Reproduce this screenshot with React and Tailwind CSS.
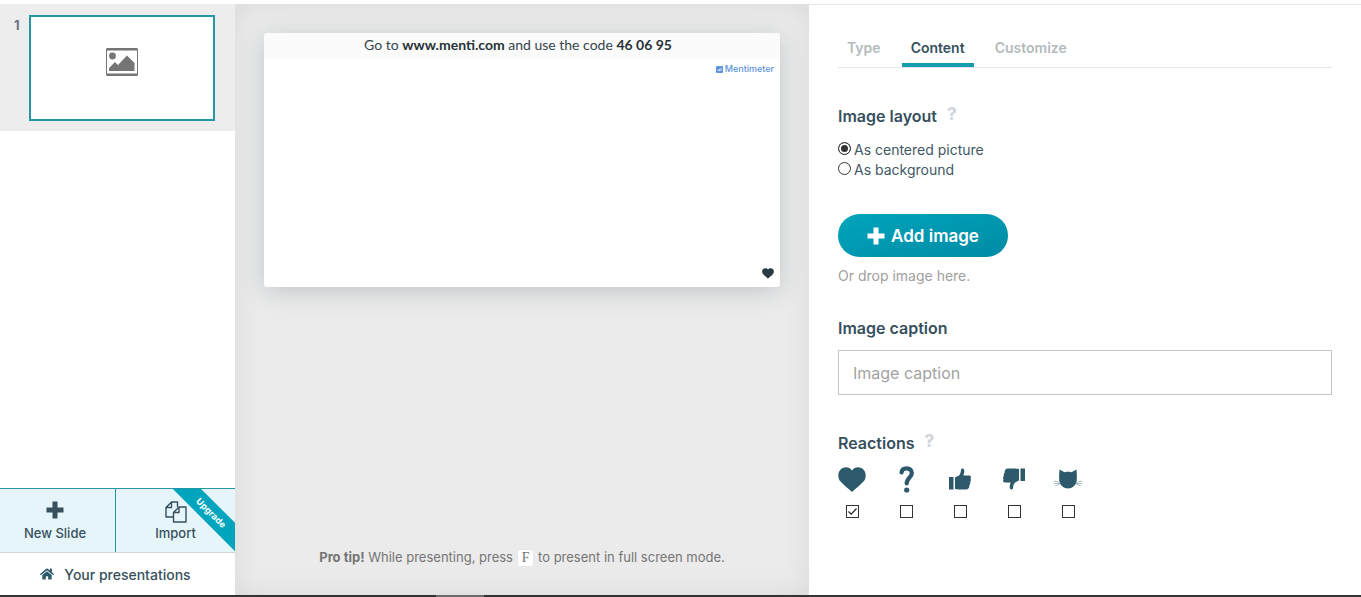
import React, { useState } from 'react';
import { FaHome } from 'react-icons/fa';

const PlusIcon = ({ className }) => (
  <svg viewBox="0 0 18 18" fill="currentColor" className={className} aria-hidden="true">
    <path d="M6.5 0.5h5v6h6v5h-6v6h-5v-6h-6v-5h6z" />
  </svg>
);

const FilesIcon = ({ className }) => (
  <svg viewBox="0 0 22 22" fill="none" stroke="currentColor" strokeWidth="1.4" strokeLinejoin="round" className={className} aria-hidden="true">
    <path d="M8 16H1V6.5L6.500 1H12.500V6M6.500 1v5.500H1" />
    <path d="M14 6h7V21H8.500V11.500zM14 6v5.500H8.500" />
  </svg>
);

const ImageIcon = ({ className }) => (
  <svg viewBox="0 0 32 28" className={className} aria-hidden="true">
    <path d="M1 0h30l1 1v26l-1 1H1l-1-1V1zM1 2.5v23h30v-23z" fill="#757575" fillRule="evenodd" />
    <circle cx="6.5" cy="8" r="3.4" fill="#757575" />
    <path d="M3 23v-3l6-6 3 3 9-9.500 7.500 7.500v8z" fill="#757575" />
  </svg>
);

const HeartIcon = ({ className }) => (
  <svg viewBox="0 0 28 25" fill="currentColor" className={className} aria-hidden="true">
    <path d="M14 25C12.500 23.500 5 17.500 2.300 14.300C-0.200 11.300-.5 6 2.200 2.900C5.200-.6 11.200-.7 14 3.400C16.800-.7 22.800-.6 25.800 2.900C28.500 6 28.200 11.300 25.700 14.300C23 17.500 15.500 23.500 14 25z" />
  </svg>
);

const QuestionIcon = ({ className }) => (
  <svg viewBox="0 0 28 28" className={className} aria-hidden="true">
    <path d="M9.500 7.500C9.800 4.500 11.800 3.300 14.500 3.300C17.800 3.300 19.800 5.200 19.800 8.200C19.800 12.500 14.700 12.500 14.700 18.500" fill="none" stroke="currentColor" strokeWidth="4.200" strokeLinecap="round" />
    <circle cx="14.700" cy="25" r="2.600" fill="currentColor" />
  </svg>
);

const ThumbIcon = ({ className }) => (
  <svg viewBox="0 0 22 22" fill="currentColor" className={className} aria-hidden="true">
    <path d="M0 9h4.500v12.500H0zM6 9.500L10 7.500C11.500 5.800 11.800 4 12 2C12.200 .6 13.200 .2 14.300 .8C15.800 1.800 15.500 4.500 14.300 7.500H20C22 7.500 22.300 9.300 21.500 10.500C22.200 11.500 22 13 21.200 13.800C21.500 15 21.200 16.400 20.400 17.200C20.500 19.500 19.500 21.500 17 21.500H10C8.500 21.500 7.500 21 6 21z" />
  </svg>
);

const CatIcon = ({ className }) => (
  <svg viewBox="0 0 28 20" className={className} aria-hidden="true">
    <path d="M5.500 .5L10.500 3.200C12.500 2.600 15.500 2.600 17.500 3.200L22.500 .5C22.700 3.500 23 7 22.800 11C22.500 16 18 19.500 14 19.500S5.500 16 5.200 11C5 7 5.300 3.500 5.500 .5z" fill="#2d5a6b" />
    <path d="M0 12l6 1.500M1 17l5-2M28 12l-6 1.500M27 17l-5-2M0 14.500h6M28 14.500h-6" stroke="#9bb0b8" strokeWidth=".8" />
  </svg>
);

const reactions = [
  { id: 'heart', label: 'Heart', icon: <HeartIcon className="w-7" /> },
  { id: 'question', label: 'Question', icon: <QuestionIcon className="w-7" /> },
  { id: 'up', label: 'Thumbs up', icon: <ThumbIcon className="w-[22px]" /> },
  { id: 'down', label: 'Thumbs down', icon: <ThumbIcon className="w-[22px] rotate-180" /> },
  { id: 'cat', label: 'Cat', icon: <CatIcon className="w-7" /> },
];

const layouts = [
  { value: 'centered', label: 'As centered picture' },
  { value: 'background', label: 'As background' },
];

const tabs = ['Type', 'Content', 'Customize'];

const Sidebar = () => (
  <aside className="flex flex-col bg-white font-medium text-[#37505d]">
    <div className="flex gap-2 bg-[#ededed] pt-[11px] pr-5 pb-[10px] pl-[14px]">
      <span className="w-[7px] text-[13px] leading-5 font-bold text-gray-500">1</span>
      <button aria-label="Slide 1" className="flex h-[106px] flex-1 items-start justify-center border-2 border-[#2596a3] bg-white pt-[31px]">
        <ImageIcon className="w-8" />
      </button>
    </div>

    <div className="mt-auto grid grid-cols-[115px_1fr] border-t border-b border-t-[#2596a3] border-b-gray-300 bg-[#e6f5f9] text-[13px] leading-5">
      <button className="flex h-[63px] flex-col items-center justify-start pt-3 pr-[5px]">
        <span className="flex h-[22px] items-start">
          <PlusIcon className="w-[18px]" />
        </span>
        New Slide
      </button>
      <button className="relative flex h-[63px] flex-col items-center justify-start overflow-hidden border-l border-[#2596a3] pt-3">
        <FilesIcon className="w-[22px]" />
        Import
        <span className="absolute top-[14px] -right-[26px] w-[100px] rotate-45 bg-[#00a5bd] text-center text-[9px] leading-[20px] font-bold text-white">
          Upgrade
        </span>
      </button>
    </div>
    <a href="#presentations" className="flex h-[42px] items-center justify-center gap-[10px] pr-1 text-[14px]">
      <FaHome className="h-[14px] w-[14px] text-[#2d5a6b]" />
      Your presentations
    </a>
  </aside>
);

const Preview = () => (
  <main className="flex flex-col bg-[#ebebeb] px-[29px] pt-[29px] pb-7 shadow-[inset_0_0_28px_rgba(0,0,0,0.08)]">
    <section className="flex aspect-[516/254] flex-col rounded-[3px] bg-white shadow-[0_4px_24px_rgba(60,80,90,0.24)]">
      <p className="rounded-t-[3px] bg-[#fbfbfb] pr-2 pb-[2px] text-center font-['Lato',sans-serif] text-[14px] leading-6 text-[#34444c]">
        Go to <b className="text-[#263238]">www.menti.com</b> and use the code <b className="text-[#263238]">46 06 95</b>
      </p>
      <div className="flex items-center justify-end gap-[2px] pt-1 pr-[6px] text-[9px] leading-[12px] font-medium text-[#5f93dd]">
        <svg viewBox="0 0 7 7" className="w-[7px]" aria-hidden="true">
          <rect width="7" height="7" rx="1" fill="#5f93dd" />
          <path d="M2 5V3.500M3.500 5V3M5 5V2" stroke="#fff" strokeWidth=".8" />
        </svg>
        Mentimeter
      </div>
      <HeartIcon className="mt-auto mr-[6px] mb-2 w-3 self-end text-[#2b3942]" />
    </section>

    <p className="mt-auto text-center text-[13px] leading-5 text-[#757575]">
      <b>Pro tip!</b> While presenting, press{' '}
      <kbd className="inline-block rounded-[3px] border border-gray-200 bg-white px-1 font-['Liberation_Serif',serif] text-sm leading-4">F</kbd>
      {' '}to present in full screen mode.
    </p>
  </main>
);

const Heading = ({ children, help }) => (
  <h2 className="flex items-start gap-[10px] text-base leading-6 font-semibold text-[#37505d]">
    {children}
    {help && <button aria-label="Help" className="text-[17px] leading-5 font-extrabold text-gray-300">?</button>}
  </h2>
);

const Settings = () => {
  const [tab, setTab] = useState('Content');
  const [layout, setLayout] = useState('centered');
  const [checked, setChecked] = useState({ heart: true });
  const [caption, setCaption] = useState('');

  return (
    <section className="border-t border-gray-200 bg-white px-[29px] pt-[31px]">
      <nav className="flex gap-3 border-b border-gray-200 text-[14px] leading-5 font-semibold">
        {tabs.map((name) => (
          <button
            key={name}
            onClick={() => setTab(name)}
            className={`border-b-4 px-[9px] pt-[2px] pb-[5px] ${tab === name ? 'border-[#159dae] text-[#37505d]' : 'border-transparent text-[#b4babd]'}`}
          >
            {name}
          </button>
        ))}
      </nav>

      <div className="pt-9">
        <Heading help>Image layout</Heading>
        <div className="pt-3 text-[14px] leading-5 text-[#3f5866]">
          {layouts.map(({ value, label }) => (
            <label key={value} className="flex items-start gap-[3px]">
              <input
                type="radio"
                name="layout"
                checked={layout === value}
                onChange={() => setLayout(value)}
                className="mt-[2px] h-[13px] w-[13px] appearance-none rounded-full border border-[#333] bg-white checked:bg-[#333] checked:shadow-[inset_0_0_0_2px_white]"
              />
              {label}
            </label>
          ))}
        </div>
      </div>

      <div className="pt-[34px]">
        <button className="flex h-[43px] w-[170px] items-center justify-center gap-[6px] rounded-full bg-linear-to-br from-[#00a5bb] to-[#008ba5] text-[17px] leading-5 font-semibold text-white">
          <PlusIcon className="w-[18px]" />
          Add image
        </button>
        <p className="pt-[9px] text-[14px] leading-5 text-[#a0a0a0]">Or drop image here.</p>
      </div>

      <div className="pt-[30px] text-base text-[#37505d]">
        <label htmlFor="caption" className="block leading-6 font-semibold">Image caption</label>
        <input
          id="caption"
          value={caption}
          onChange={(e) => setCaption(e.target.value)}
          placeholder="Image caption"
          className="mt-[10px] h-[45px] w-full border border-[#c6c6c6] px-[14px] text-base outline-none placeholder:text-[#a2a2a2]"
        />
      </div>

      <div className="pt-9">
        <Heading help>Reactions</Heading>
        <div className="flex gap-[26px] pt-[10px] text-[#2d5a6b]">
          {reactions.map((item) => (
            <label key={item.id} className="flex w-7 flex-col items-center gap-3">
              <span className="flex h-7 items-center">{item.icon}</span>
              <span className="grid">
                <input
                  type="checkbox"
                  aria-label={item.label}
                  checked={!!checked[item.id]}
                  onChange={(e) => setChecked({ ...checked, [item.id]: e.target.checked })}
                  className="col-start-1 row-start-1 h-[13px] w-[13px] appearance-none border border-[#333] bg-white"
                />
                {checked[item.id] && (
                  <svg viewBox="0 0 13 13" className="pointer-events-none col-start-1 row-start-1 w-[13px]" aria-hidden="true">
                    <path d="M2.500 6.500l2.700 2.700 5.300-5.700" fill="none" stroke="#222" strokeWidth="1.200" />
                  </svg>
                )}
              </span>
            </label>
          ))}
        </div>
      </div>
    </section>
  );
};

export default function App() {
  return (
    <div className="flex min-h-screen flex-col bg-white pt-1 font-['Inter',sans-serif]">
      <div className="grid flex-1 grid-cols-[235px_574fr_552fr]">
        <Sidebar />
        <Preview />
        <Settings />
      </div>
      <footer className="h-[2px] bg-[#343234] pl-[32%]">
        <div className="h-full w-12 bg-[#6b6b6b]" />
      </footer>
    </div>
  );
}
